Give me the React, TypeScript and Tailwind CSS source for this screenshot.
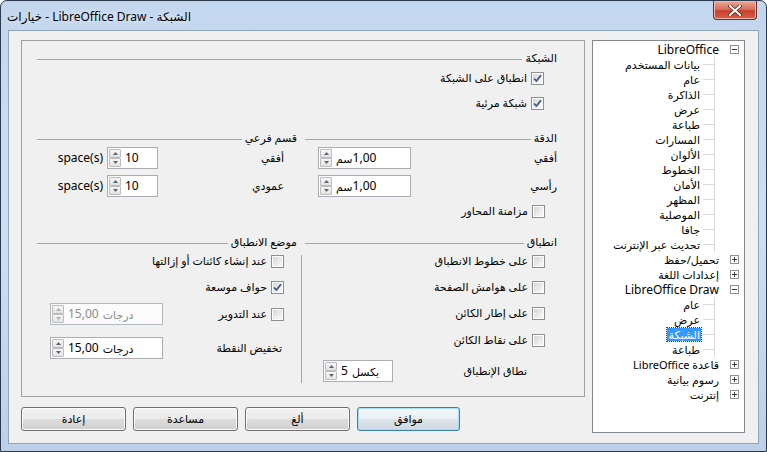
import React from "react"

const font = "font-['Noto_Sans','DejaVu_Sans',sans-serif]"

function Checkbox({ checked = false }: { checked?: boolean }) {
  return (
    <div className="w-[13px] h-[13px] shrink-0 border border-[#8e8f8f] bg-white p-px">
      <div className="w-full h-full bg-linear-to-br from-[#d6d6d6] to-[#fbfbfb] flex items-center justify-center">
        {checked && (
          <svg width="9" height="9" viewBox="0 0 9 9">
            <path d="M1 4.5 L3.4 7 L8 1.2" fill="none" stroke="#3d5688" strokeWidth="1.8" />
          </svg>
        )}
      </div>
    </div>
  )
}

function CheckRow({
  label,
  checked,
  className = "",
}: {
  label: string
  checked?: boolean
  className?: string
}) {
  return (
    <div className={`flex items-center h-[20px] gap-[4px] ${className}`}>
      <Checkbox checked={checked} />
      <span className="leading-[14px]">{label}</span>
    </div>
  )
}

function Arrow({ up, disabled }: { up?: boolean; disabled?: boolean }) {
  return (
    <div className="h-[9px] border border-[#bcbcbc] rounded-[1px] bg-linear-to-b from-[#f8f8f8] to-[#e2e2e2] flex items-center justify-center">
      <svg width="5" height="3" viewBox="0 0 5 3">
        <path
          d={up ? "M0 3 L2.5 0 L5 3 Z" : "M0 0 L2.5 3 L5 0 Z"}
          fill={disabled ? "#b0b0b0" : "#5a6678"}
        />
      </svg>
    </div>
  )
}

function SpinField({
  value,
  unit,
  unitFirst = false,
  width,
  disabled = false,
}: {
  value: string
  unit?: string
  unitFirst?: boolean
  width: string
  disabled?: boolean
}) {
  return (
    <div
      dir="ltr"
      className={`${width} h-[22px] shrink-0 border flex items-center gap-[4px] pl-px ${
        disabled
          ? "border-[#b4bac0] bg-[#fbfbfb] text-[#8c8c8c]"
          : "border-[#abadb3] bg-white text-black"
      }`}
    >
      <div className="flex flex-col w-[12px]">
        <Arrow up disabled={disabled} />
        <Arrow disabled={disabled} />
      </div>
      <div className="flex items-center text-[12px] leading-none whitespace-nowrap">
        {unit && unitFirst && <span className="text-[11px]">{unit}</span>}
        <span>{value}</span>
        {unit && !unitFirst && <span className="ml-[4px] text-[11px]">{unit}</span>}
      </div>
    </div>
  )
}

function Header({ label }: { label: string }) {
  return (
    <div className="flex items-center h-[14px] gap-[3px]">
      <span className="whitespace-nowrap leading-[14px]">{label}</span>
      <div className="flex-1 h-px bg-[#a6a6a6] mt-[2px]" />
    </div>
  )
}

function WinButton({
  label,
  width,
  primary = false,
}: {
  label: string
  width: string
  primary?: boolean
}) {
  return (
    <div
      className={`${width} h-[24px] rounded-[3px] border flex items-center justify-center text-[11px] ${
        primary
          ? "border-[#3c7fb1] bg-[linear-gradient(to_bottom,#f4f8fb_0%,#e9eff4_50%,#dce4ea_50%,#cfd9e1_100%)] shadow-[inset_0_0_0_1px_#a8dcf7]"
          : "border-[#707070] bg-[linear-gradient(to_bottom,#f2f2f2_0%,#ebebeb_50%,#dddddd_50%,#cfcfcf_100%)] shadow-[inset_0_0_0_1px_#fcfcfc]"
      }`}
    >
      {label}
    </div>
  )
}

function Expander({ open }: { open: boolean }) {
  return (
    <div className="w-[9px] h-[9px] shrink-0 border border-[#919191] bg-white flex items-center justify-center">
      <svg width="5" height="5" viewBox="0 0 5 5">
        <path d="M0 2.5 H5" stroke="#3a3a3a" strokeWidth="1" />
        {!open && <path d="M2.5 0 V5" stroke="#3a3a3a" strokeWidth="1" />}
      </svg>
    </div>
  )
}

interface TreeItem {
  label: string
  level: 0 | 1
  open?: boolean
  selected?: boolean
  latin?: boolean
}

const tree: TreeItem[] = [
  { label: "LibreOffice", level: 0, open: true, latin: true },
  { label: "بيانات المستخدم", level: 1 },
  { label: "عام", level: 1 },
  { label: "الذاكرة", level: 1 },
  { label: "عرض", level: 1 },
  { label: "طباعة", level: 1 },
  { label: "المسارات", level: 1 },
  { label: "الألوان", level: 1 },
  { label: "الخطوط", level: 1 },
  { label: "الأمان", level: 1 },
  { label: "المظهر", level: 1 },
  { label: "الموصلية", level: 1 },
  { label: "جافا", level: 1 },
  { label: "تحديث عبر الإنترنت", level: 1 },
  { label: "تحميل/حفظ", level: 0, open: false },
  { label: "إعدادات اللغة", level: 0, open: false },
  { label: "LibreOffice Draw", level: 0, open: true, latin: true },
  { label: "عام", level: 1 },
  { label: "عرض", level: 1 },
  { label: "الشبكة", level: 1, selected: true },
  { label: "طباعة", level: 1 },
  { label: "قاعدة LibreOffice", level: 0, open: false },
  { label: "رسوم بيانية", level: 0, open: false },
  { label: "إنترنت", level: 0, open: false },
]

function Tree() {
  return (
    <div
      dir="rtl"
      className="w-[153px] h-[393px] border border-[#828790] bg-white pt-px text-[11px]"
    >
      {tree.map((item, i) =>
        item.level === 0 ? (
          <div key={i} className="flex items-center h-[15px] pr-[5px] gap-[11px]">
            <Expander open={!!item.open} />
            <span
              className={`whitespace-nowrap leading-[13px] ${
                item.latin ? "text-[12px]" : "text-[11px]"
              }`}
            >
              {item.label}
            </span>
          </div>
        ) : (
          <div key={i} className="flex items-center h-[15px]">
            <div className="w-[30px] h-full border-l border-[#dadada]" />
            <div className="w-[11px] h-px bg-[#dadada]" />
            <span
              className={`whitespace-nowrap ml-[2px] mr-[2px] px-px leading-[13px] ${
                item.selected
                  ? "bg-[#3399ff] text-white outline outline-dotted outline-[#1a3f8a]"
                  : ""
              }`}
            >
              {item.label}
            </span>
          </div>
        )
      )}
    </div>
  )
}

function Panel() {
  return (
    <div
      dir="rtl"
      className="w-[564px] h-[357px] border border-[#a0a0a0] bg-[#f0f0f0] pl-[15px] pr-[27px] pt-[10px] text-[11px]"
    >
      <Header label="الشبكة" />
      <div className="pr-[13px] mt-[3px]">
        <CheckRow label="انطباق على الشبكة" checked />
        <CheckRow label="شبكة مرئية" checked className="mt-[5px]" />
      </div>

      <div className="flex mt-[18px]">
        <div className="w-[252px]">
          <Header label="الدقة" />
          <div className="flex items-center h-[22px] mt-[2px] pl-[13px]">
            <span className="flex-1">أفقي</span>
            <SpinField value="1,00" unit="سم" unitFirst width="w-[93px]" />
          </div>
          <div className="flex items-center h-[22px] mt-[6px] pl-[13px]">
            <span className="flex-1">رأسي</span>
            <SpinField value="1,00" unit="سم" unitFirst width="w-[93px]" />
          </div>
          <div className="pr-[12px] mt-[4px]">
            <CheckRow label="مزامنة المحاور" />
          </div>
        </div>
        <div className="w-[8px]" />
        <div className="w-[260px]">
          <Header label="قسم فرعي" />
          <div className="flex items-center h-[22px] mt-[2px] pr-[13px]">
            <span className="w-[126px]">أفقي</span>
            <SpinField value="10" width="w-[51px]" />
            <span dir="ltr" className="mr-[4px] text-[12px]">space(s)</span>
          </div>
          <div className="flex items-center h-[22px] mt-[6px] pr-[13px]">
            <span className="w-[126px]">عمودي</span>
            <SpinField value="10" width="w-[51px]" />
            <span dir="ltr" className="mr-[4px] text-[12px]">space(s)</span>
          </div>
        </div>
      </div>

      <div className="flex mt-[14px]">
        <div className="w-[252px]">
          <Header label="انطباق" />
          <div className="pr-[12px]">
            <CheckRow label="على خطوط الانطباق" className="mt-[2px]" />
            <CheckRow label="على هوامش الصفحة" className="mt-[6px]" />
            <CheckRow label="على إطار الكائن" className="mt-[6px]" />
            <CheckRow label="على نقاط الكائن" className="mt-[7px]" />
          </div>
          <div className="flex items-center h-[22px] mt-[10px] pr-[30px]">
            <span className="w-[134px]">نطاق الإنطباق</span>
            <SpinField value="5" unit="بكسل" width="w-[70px]" />
          </div>
        </div>
        <div className="w-[8px] flex justify-end">
          <div className="w-px h-[128px] bg-[#a6a6a6] mt-[20px] ml-[4px]" />
        </div>
        <div className="w-[260px]">
          <Header label="موضع الانطباق" />
          <div className="pr-[13px]">
            <CheckRow label="عند إنشاء كائنات أو إزالتها" className="mt-[2px]" />
            <CheckRow label="حواف موسعة" checked className="mt-[6px]" />
          </div>
          <div className="flex items-center h-[22px] mt-[6px] pr-[13px] pl-[13px]">
            <Checkbox />
            <span className="flex-1 mr-[4px]">عند التدوير</span>
            <SpinField value="15,00" unit="درجات" width="w-[113px]" disabled />
          </div>
          <div className="flex items-center h-[22px] mt-[12px] pr-[15px] pl-[13px]">
            <span className="flex-1">تخفيض النقطة</span>
            <SpinField value="15,00" unit="درجات" width="w-[113px]" />
          </div>
        </div>
      </div>
    </div>
  )
}

export default function App() {
  return (
    <div
      className={`${font} w-[767px] h-[452px] border border-[#2b3a4d] rounded-t-[7px] bg-linear-to-b from-[#c2d6ee] via-[#cfdff2] to-[#bcd0e9] text-black overflow-hidden`}
    >
      <div className="flex justify-between h-[29px]">
        <div dir="ltr" className="pl-[6px] pt-[8px] text-[12px] leading-[16px] [text-shadow:0_0_6px_#ffffff]">
          خيارات - LibreOffice Draw - الشبكة
        </div>
        <div className="mr-[9px] w-[44px] h-[19px] rounded-b-[4px] border border-t-0 border-[#6e2b22] bg-[linear-gradient(to_bottom,#e9a99b_0%,#d8705e_45%,#c7402c_55%,#d4604a_100%)] flex items-center justify-center shadow-[inset_0_0_0_1px_#f0b8a8]">
          <svg width="14" height="11" viewBox="0 0 14 11">
            <path d="M2 1 L12 10 M12 1 L2 10" stroke="#5a2018" strokeWidth="3.6" strokeLinecap="round" />
            <path d="M2 1 L12 10 M12 1 L2 10" stroke="#ffffff" strokeWidth="2.2" strokeLinecap="round" />
          </svg>
        </div>
      </div>
      <div className="ml-[7px] w-[751px] h-[414px] border border-[#8fa4bd] bg-[#f0f0f0] pl-[12px] pt-[9px] flex gap-[7px]">
        <div className="w-[564px]">
          <Panel />
          <div className="flex gap-[7px] mt-[10px]">
            <WinButton label="إعادة" width="w-[105px]" />
            <WinButton label="مساعدة" width="w-[105px]" />
            <WinButton label="ألغ" width="w-[105px]" />
            <WinButton label="موافق" width="w-[103px]" primary />
          </div>
        </div>
        <Tree />
      </div>
    </div>
  )
}
